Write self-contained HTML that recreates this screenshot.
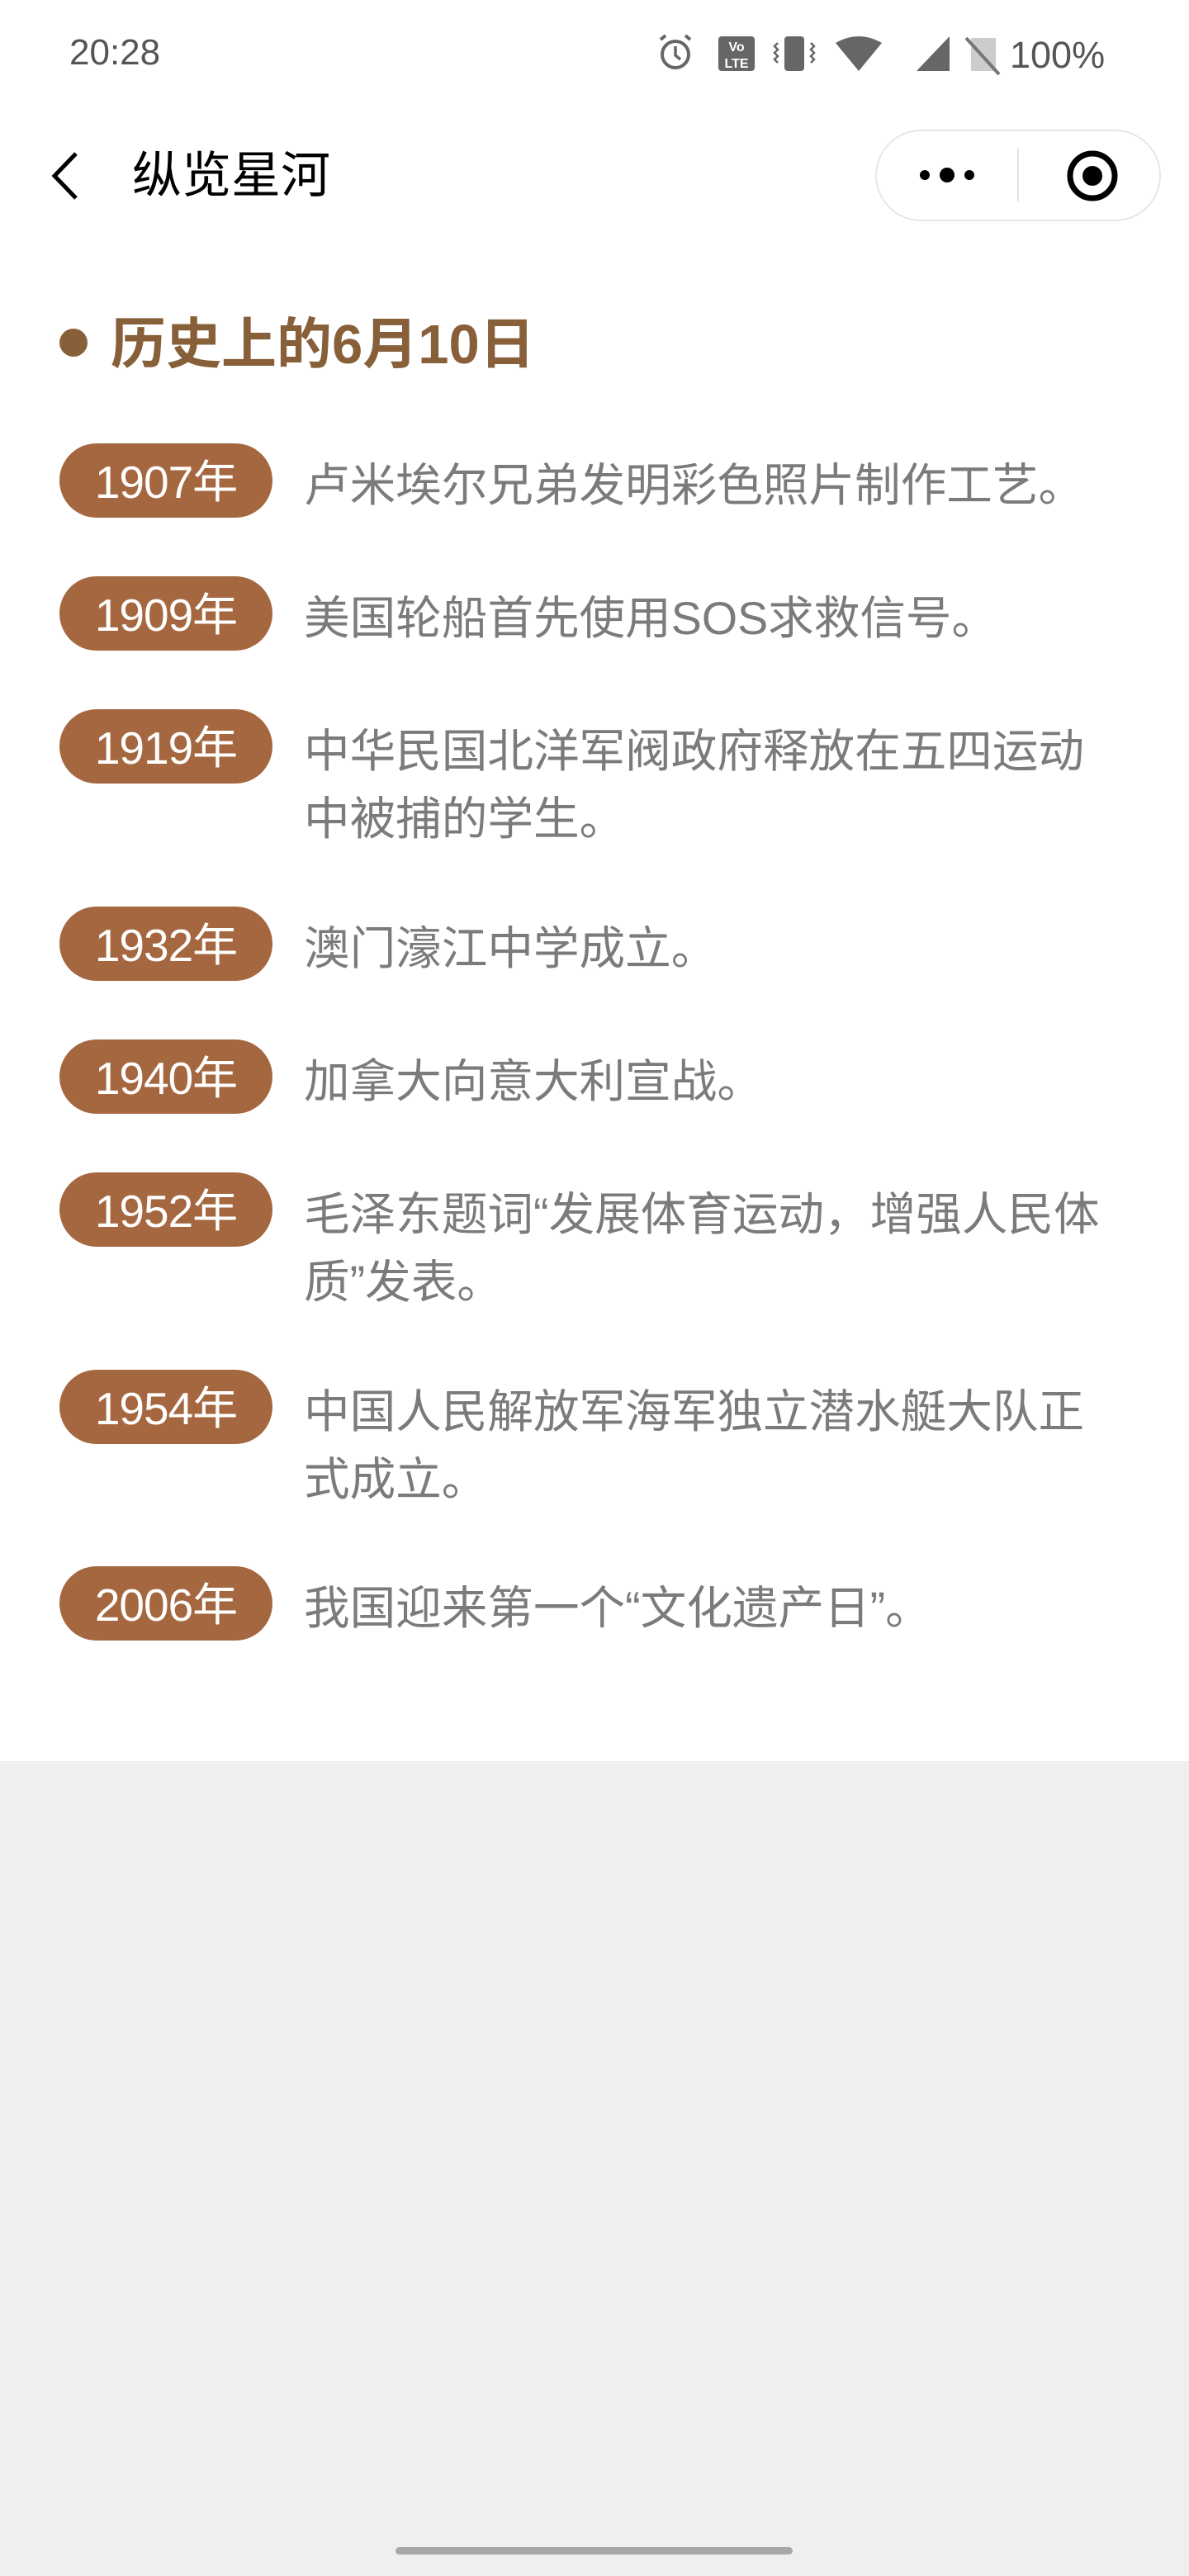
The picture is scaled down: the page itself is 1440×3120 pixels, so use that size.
<!DOCTYPE html>
<html><head><meta charset="utf-8"><style>
*{margin:0;padding:0;box-sizing:border-box}
body{width:1440px;height:3120px;background:#efefef;position:relative;overflow:hidden;font-family:"Liberation Sans","Noto Sans CJK SC",sans-serif}
.white{position:absolute;left:0;top:0;width:1440px;height:2133px;background:#fff}
.abs{position:absolute}
.pill{position:absolute;left:72px;width:258px;height:90px;border-radius:45px;background:#a5673f;color:#fff;font-size:55px;line-height:94px;text-align:center;letter-spacing:-1px}
.txt{position:absolute;left:368px;font-size:55.6px;line-height:82px;color:#7b7b7b;white-space:nowrap}
</style></head><body>
<div class="white"></div>
<div class="abs" style="left:84px;top:38px;font-size:44px;color:#555;line-height:52px">20:28</div>
<svg class="abs" style="left:790px;top:38px" width="560" height="54" viewBox="0 0 560 54">
<g fill="#666">
<circle cx="28" cy="28" r="16" fill="none" stroke="#666" stroke-width="4"/>
<path d="M28 18v11l6 5" stroke="#666" stroke-width="3.5" fill="none"/>
<path d="M10 10l6-5M46 10l-6-5" stroke="#666" stroke-width="4"/>
<rect x="80" y="6" width="44" height="42" rx="4"/>
<text x="102" y="24" font-size="16" fill="#fff" text-anchor="middle" font-weight="bold">Vo</text>
<text x="102" y="44" font-size="16" fill="#fff" text-anchor="middle" font-weight="bold">LTE</text>
<rect x="160" y="6" width="24" height="42" rx="4"/>
<path d="M152 14l-4 4 4 4-4 4 4 4-4 4 4 4M192 14l4 4-4 4 4 4-4 4 4 4-4 4" stroke="#666" stroke-width="2.5" fill="none"/>
<path d="M222 14q28-16 56 0l-28 34z"/>
<path d="M320 48h40V6z"/>
<path d="M386 8h30v40h-30z" fill="#ccc"/>
<path d="M380 8l40 44" stroke="#777" stroke-width="4"/>
</g>
<text x="433" y="44" font-size="45" fill="#555" font-family="Liberation Sans">100%</text>
</svg>
<svg class="abs" style="left:56px;top:182px" width="44" height="62" viewBox="0 0 44 62"><path d="M36 4L10 31l26 27" stroke="#000" stroke-width="5" fill="none"/></svg>
<div class="abs" style="left:160px;top:178px;font-size:60px;line-height:70px;color:#000">纵览星河</div>
<div class="abs" style="left:1060px;top:157px;width:346px;height:111px;border:2px solid #e6e6e6;border-radius:56px;background:#fff"></div>
<div class="abs" style="left:1232px;top:180px;width:2px;height:64px;background:#e3e3e3"></div>
<svg class="abs" style="left:1100px;top:190px" width="100" height="44"><circle cx="20" cy="22" r="6"/><circle cx="47" cy="22" r="9"/><circle cx="74" cy="22" r="6"/></svg>
<svg class="abs" style="left:1290px;top:180px" width="66" height="66"><circle cx="33" cy="33" r="27" fill="none" stroke="#000" stroke-width="7"/><circle cx="33" cy="33" r="12"/></svg>
<div class="abs" style="left:72px;top:398px;width:34px;height:34px;border-radius:50%;background:#87603a"></div>
<div class="abs" style="left:134px;top:378px;font-size:67px;line-height:80px;font-weight:bold;color:#87603a">历史上的6月10日</div>

<div class="pill" style="top:537px">1907年</div><div class="txt" style="top:547px">卢米埃尔兄弟发明彩色照片制作工艺。</div>
<div class="pill" style="top:698px">1909年</div><div class="txt" style="top:708px">美国轮船首先使用SOS求救信号。</div>
<div class="pill" style="top:859px">1919年</div><div class="txt" style="top:869px">中华民国北洋军阀政府释放在五四运动<br>中被捕的学生。</div>
<div class="pill" style="top:1098px">1932年</div><div class="txt" style="top:1108px">澳门濠江中学成立。</div>
<div class="pill" style="top:1259px">1940年</div><div class="txt" style="top:1269px">加拿大向意大利宣战。</div>
<div class="pill" style="top:1420px">1952年</div><div class="txt" style="top:1430px">毛泽东题词“发展体育运动，增强人民体<br>质”发表。</div>
<div class="pill" style="top:1659px">1954年</div><div class="txt" style="top:1669px">中国人民解放军海军独立潜水艇大队正<br>式成立。</div>
<div class="pill" style="top:1897px">2006年</div><div class="txt" style="top:1907px">我国迎来第一个“文化遗产日”。</div>

<div class="abs" style="left:479px;top:3085px;width:481px;height:9px;border-radius:5px;background:#a8a8a8"></div>
</body></html>
